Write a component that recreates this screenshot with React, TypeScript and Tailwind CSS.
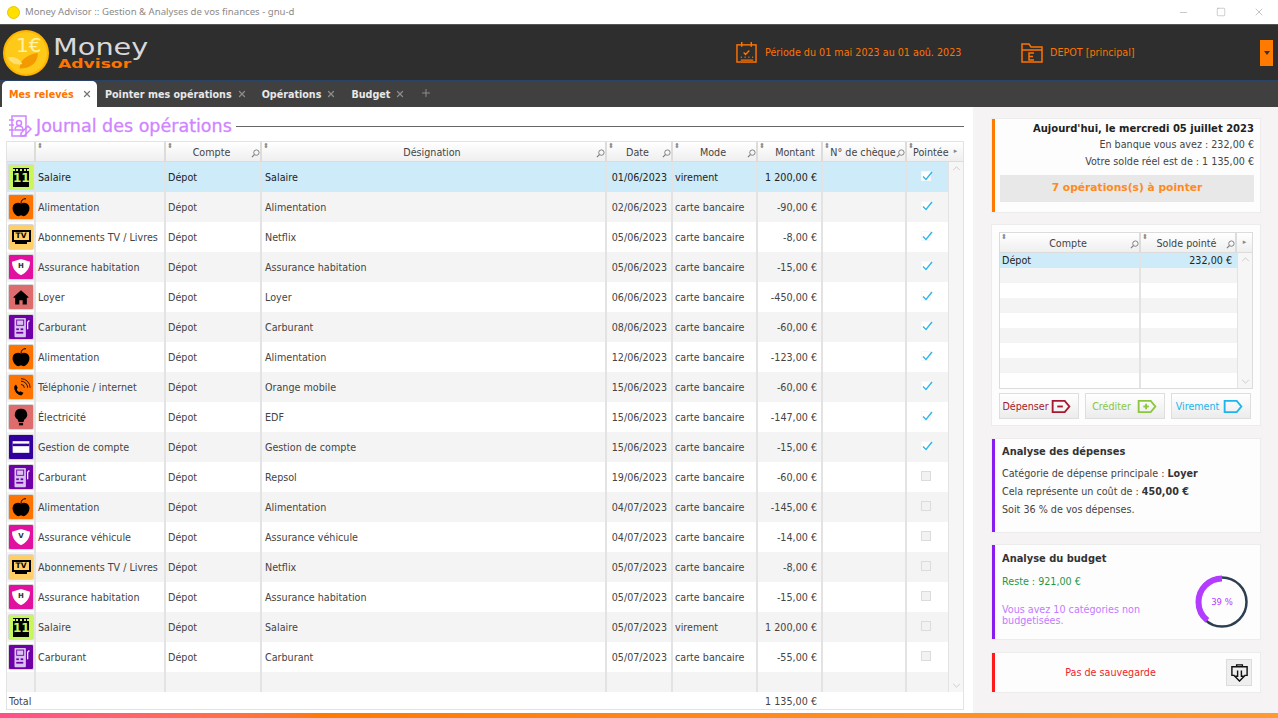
import { Minus, Plus, Square, X } from "lucide-react";

const FONT = "font-['DejaVu_Sans',sans-serif]";

type Kind = "salaire" | "alim" | "tv" | "assurH" | "assurV" | "loyer" | "carbu" | "tel" | "elec" | "compte";

const operations: [Kind, string, string, string, string, string, boolean][] = [
  ["salaire", "Salaire", "Salaire", "01/06/2023", "virement", "1 200,00 €", true],
  ["alim", "Alimentation", "Alimentation", "02/06/2023", "carte bancaire", "-90,00 €", true],
  ["tv", "Abonnements TV / Livres", "Netflix", "05/06/2023", "carte bancaire", "-8,00 €", true],
  ["assurH", "Assurance habitation", "Assurance habitation", "05/06/2023", "carte bancaire", "-15,00 €", true],
  ["loyer", "Loyer", "Loyer", "06/06/2023", "carte bancaire", "-450,00 €", true],
  ["carbu", "Carburant", "Carburant", "08/06/2023", "carte bancaire", "-60,00 €", true],
  ["alim", "Alimentation", "Alimentation", "12/06/2023", "carte bancaire", "-123,00 €", true],
  ["tel", "Téléphonie / internet", "Orange mobile", "15/06/2023", "carte bancaire", "-60,00 €", true],
  ["elec", "Électricité", "EDF", "15/06/2023", "carte bancaire", "-147,00 €", true],
  ["compte", "Gestion de compte", "Gestion de compte", "15/06/2023", "carte bancaire", "-15,00 €", true],
  ["carbu", "Carburant", "Repsol", "19/06/2023", "carte bancaire", "-60,00 €", false],
  ["alim", "Alimentation", "Alimentation", "04/07/2023", "carte bancaire", "-145,00 €", false],
  ["assurV", "Assurance véhicule", "Assurance véhicule", "04/07/2023", "carte bancaire", "-14,00 €", false],
  ["tv", "Abonnements TV / Livres", "Netflix", "05/07/2023", "carte bancaire", "-8,00 €", false],
  ["assurH", "Assurance habitation", "Assurance habitation", "05/07/2023", "carte bancaire", "-15,00 €", false],
  ["salaire", "Salaire", "Salaire", "05/07/2023", "virement", "1 200,00 €", false],
  ["carbu", "Carburant", "Carburant", "05/07/2023", "carte bancaire", "-55,00 €", false],
];

const iconBg: Record<Kind, string> = {
  salaire: "bg-[#c8f75c]",
  alim: "bg-[#ff7300]",
  tv: "bg-[#ffcf66]",
  assurH: "bg-[#e2109f]",
  assurV: "bg-[#e2109f]",
  loyer: "bg-[#de6c6c]",
  carbu: "bg-[#6f00a8]",
  tel: "bg-[#ff7300]",
  elec: "bg-[#de6c6c]",
  compte: "bg-[#32009c]",
};

function Glyph({ kind }: { kind: Kind }) {
  if (kind === "salaire")
    return (
      <div className="flex h-[19px] w-[16px] flex-col bg-black">
        <div className="mt-[1px] h-[2px] border-t-2 border-dotted border-[#c8f75c]" />
        <div className="flex-1 text-center text-[12px] leading-[15px] font-bold text-[#c8f75c]">11</div>
      </div>
    );
  if (kind === "tv")
    return (
      <div className="flex w-[20px] flex-col items-center">
        <div className="h-[12px] w-[19px] border-2 border-black text-center text-[7.5px] leading-[8px] font-bold text-black">TV</div>
        <div className="h-[2px] w-[12px] bg-black" />
      </div>
    );
  if (kind === "assurH" || kind === "assurV")
    return (
      <div className="relative h-[16px] w-[18px]">
        <svg viewBox="0 0 20 18" className="absolute inset-0">
          <path d="M0 3 10 0 20 3C20 10 16 15 10 18 4 15 0 10 0 3Z" fill="#fff" />
        </svg>
        <span className="absolute inset-x-0 top-[3px] text-center text-[7px] leading-[9px] font-bold text-[#333]">
          {kind === "assurH" ? "H" : "V"}
        </span>
      </div>
    );
  if (kind === "carbu")
    return (
      <svg viewBox="0 0 24 24" className="h-[21px] w-[21px]">
        <rect x="4" y="1" width="13" height="22" rx="1" fill="#d9c2ee" />
        <rect x="6" y="3" width="9" height="7" fill="#6f00a8" />
        <rect x="7" y="4" width="7" height="5" fill="#d9c2ee" />
        <rect x="6" y="13" width="3" height="2" fill="#6f00a8" />
        <rect x="11" y="13" width="3" height="2" fill="#6f00a8" />
        <rect x="6" y="17" width="8" height="2" fill="#6f00a8" />
        <path d="M19 14V6l2-2" stroke="#fff" strokeWidth="1.5" fill="none" />
      </svg>
    );
  const paths: Partial<Record<Kind, React.ReactNode>> = {
    alim: (
      <>
        <path d="M12 8c-3-2-9-1-10 4-1 6 4 11 7 11 1 0 2-1 3-1s2 1 3 1c3 0 8-5 7-11-1-5-7-6-10-4Z" fill="#000" />
        <path d="M12 8c0-4 2-6 6-6" stroke="#000" strokeWidth="1.2" fill="none" />
      </>
    ),
    loyer: <path d="M12 4 3 12v1h2v8h5v-5h4v5h5v-8h2v-1Z" fill="#000" />,
    tel: (
      <>
        <path d="M4 11c-1 6 4 11 9 11l2-3-4-2-1 1c-1 0-3-2-3-3l1-2-2-4Z" fill="#000" />
        <path d="M12 9a4 4 0 0 1 4 4M12 5a8 8 0 0 1 8 8M12 2a11 11 0 0 1 11 11" stroke="#000" strokeWidth="1" fill="none" />
      </>
    ),
    elec: (
      <>
        <path d="M12 2a7 7 0 0 0-4 13l1 3h6l1-3a7 7 0 0 0-4-13Z" fill="#000" />
        <rect x="9.5" y="19" width="5" height="3" fill="#000" />
      </>
    ),
    compte: (
      <>
        <rect x="2" y="5" width="20" height="14" fill="#fff" />
        <rect x="2" y="8" width="20" height="3" fill="#32009c" />
      </>
    ),
  };
  return (
    <svg viewBox="0 0 24 24" className="h-[20px] w-[20px]">
      {paths[kind]}
    </svg>
  );
}

function CatIcon({ kind }: { kind: Kind }) {
  return (
    <div className={`flex h-[26px] w-[26px] items-center justify-center overflow-hidden rounded-[2px] border border-[#d8d8d8] ${iconBg[kind]}`}>
      <Glyph kind={kind} />
    </div>
  );
}

function Loupe() {
  return (
    <svg viewBox="0 0 10 10" className="mb-[1px] h-[9px] w-[9px] shrink-0 text-[#777]">
      <circle cx="6" cy="4" r="3" stroke="currentColor" fill="none" />
      <path d="M3.8 6.2 1 9" stroke="currentColor" strokeWidth="1.2" />
    </svg>
  );
}

function HeadCell({ label, w, search = true, sort = true, className = "" }: { label?: string; w: string; search?: boolean; sort?: boolean; className?: string }) {
  return (
    <div className={`relative flex h-full shrink-0 items-end border-r-2 border-[#dcdcdc] pb-[2px] pl-[6px] ${w} ${className}`}>
      {sort && <span className="absolute top-0 left-[1px] text-[7px] leading-[9px] text-[#888]">⬍</span>}
      <span className="flex-1 text-center text-[9.6px] leading-[13px] whitespace-nowrap text-[#444]">{label}</span>
      {label && search && <Loupe />}
    </div>
  );
}

function Check({ on }: { on: boolean }) {
  return (
    <div className={`relative h-[10px] w-[10px] border ${on ? "border-[#f4f8fb] bg-white" : "border-[#dcdcdc] bg-[#f2f2f2]"}`}>
      {on && (
        <svg viewBox="0 0 12 12" className="absolute -top-[2px] -left-[1px] h-[12px] w-[12px]">
          <path d="M2 6.5 5 9.5 11 2" stroke="#33b5ea" strokeWidth="1.4" fill="none" />
        </svg>
      )}
    </div>
  );
}

function Row({ op, index }: { op: (typeof operations)[number]; index: number }) {
  const [kind, cat, des, date, mode, amount, on] = op;
  const bg = index === 0 ? "bg-[#cdebf8] text-[#222]" : index % 2 === 1 ? "bg-[#f4f4f4] text-[#444]" : "bg-white text-[#444]";
  const cell = "flex h-full shrink-0 items-center border-r-2 border-[#e3e3e3] px-[2px] pt-[2px] text-[9.6px] whitespace-nowrap";
  return (
    <div className={`flex h-[30px] ${bg}`}>
      <div className={`${cell} w-[29px] !px-0 !pt-0 !pl-[1px]`}>
        <CatIcon kind={kind} />
      </div>
      <div className={`${cell} w-[130px]`}>{cat}</div>
      <div className={`${cell} w-[96px]`}>Dépot</div>
      <div className={`${cell} w-[345px] !pl-[3px]`}>{des}</div>
      <div className={`${cell} w-[66px] justify-end !pr-[4px]`}>{date}</div>
      <div className={`${cell} w-[85px]`}>{mode}</div>
      <div className={`${cell} w-[65px] justify-end !pr-[4px]`}>{amount}</div>
      <div className={`${cell} w-[84px]`} />
      <div className="flex h-full w-[41px] shrink-0 items-center justify-center pr-[3px] pb-[2px]">
        <Check on={on} />
      </div>
    </div>
  );
}

function ScrollColumn() {
  return (
    <div className="flex h-full w-[15px] shrink-0 flex-col items-center justify-between border-l border-[#e3e3e3] bg-[#f6f6f6] py-[4px] text-[#c4c4c4]">
      <svg viewBox="0 0 10 6" className="h-[5px] w-[9px]"><path d="M1 5 5 1 9 5" stroke="currentColor" fill="none" /></svg>
      <svg viewBox="0 0 10 6" className="h-[5px] w-[9px]"><path d="M1 1 5 5 9 1" stroke="currentColor" fill="none" /></svg>
    </div>
  );
}

function Tab({ label, ml }: { label: string; ml: string }) {
  return (
    <div className={`flex items-center gap-[5px] text-[#e8e8e8] ${ml}`}>
      <span className="pt-[2px] text-[9.6px] font-bold whitespace-nowrap">{label}</span>
      <X size={10} strokeWidth={3} className="mb-[1px] text-[#8c8c8c]" />
    </div>
  );
}

function Card({ accent, className = "", children }: { accent: string; className?: string; children: React.ReactNode }) {
  return (
    <div className={`ml-[18px] flex w-[270px] border border-[#ececec] bg-[#fdfdfd] ${className}`}>
      <div className={`w-[3px] shrink-0 ${accent}`} />
      <div className="min-w-0 flex-1">{children}</div>
    </div>
  );
}

function ActionBtn({ label, color, sign }: { label: string; color: string; sign?: string }) {
  return (
    <div className="flex h-[26px] w-[80px] items-center border border-[#dedede] bg-gradient-to-b from-white to-[#ececec] pr-[7px] text-[9.6px]" style={{ color }}>
      <span className="flex-1 pt-[2px] text-center">{label}</span>
      <svg viewBox="0 0 20 14" className="h-[13px] w-[20px]" fill="none" stroke={color} strokeWidth="2">
        <path d="M1 1H14L19 7 14 13H1Z" />
        {sign && <path d="M6 7H12" />}
        {sign === "+" && <path d="M9 4V10" />}
      </svg>
    </div>
  );
}

export default function App() {
  return (
    <div className={`flex h-[718px] w-[1278px] flex-col overflow-hidden bg-white ${FONT}`}>
      {/* barre de titre */}
      <div className="flex h-[25px] shrink-0 items-center border-b border-[#555] bg-white pl-[7px]">
        <div className="h-[13px] w-[13px] rounded-full border border-[#e8c800] bg-[#ffe000]" />
        <span className="ml-[5px] font-['Noto_Sans',sans-serif] text-[9.6px] text-[#8a8a8a]">
          Money Advisor :: Gestion &amp; Analyses de vos finances - gnu-d
        </span>
        <div className="ml-auto flex items-center gap-[27px] pr-[13px] text-[#8a8a8a]">
          <Minus size={11} strokeWidth={1} />
          <Square size={10} strokeWidth={1} />
          <X size={12} strokeWidth={1} />
        </div>
      </div>

      {/* en-tête */}
      <div className="flex h-[56px] shrink-0 items-center border-b border-[#2a4468] bg-[#2e2e2e]">
        <div className="relative ml-[3px] h-[46px] w-[46px] shrink-0 overflow-hidden rounded-full border-2 border-[#ffb400] bg-[#ffc91a]">
          <span className="absolute top-[2px] left-[11px] text-[20px] leading-[22px] text-[#fff2a8]">1€</span>
          <svg viewBox="0 0 46 46" className="absolute inset-0">
            <path d="M16 40C16 30 26 24 36 23 36 33 29 40 16 40Z" fill="#f29a00" />
            <path d="M3 28C9 26 16 29 19 35 12 37 6 34 3 28Z" fill="#ffdf70" />
          </svg>
        </div>
        <div className="mt-[1px] ml-[4px] flex w-[100px] flex-col">
          <span className="origin-left scale-x-[1.25] text-[23px] leading-[20px] text-[#d9d9d9]">Money</span>
          <span className="origin-left translate-x-[5px] scale-x-[1.32] text-[13px] leading-[13px] font-bold text-[#ff7300]">Advisor</span>
        </div>
        <svg viewBox="0 0 22 22" className="ml-[583px] h-[21px] w-[21px]" fill="none" stroke="#ff7300" strokeWidth="1.5">
          <rect x="1" y="3" width="20" height="18" />
          <path d="M6 0v5M16 0v5M5 16h1M9 16h1M13 16h1M17 16h1M5 19h13M8 11l2 2 4-4" />
        </svg>
        <span className="ml-[8px] w-[194px] pt-[1px] text-[9.6px] whitespace-nowrap text-[#ff7300]">Période du 01 mai 2023 au 01 aoû. 2023</span>
        <svg viewBox="0 0 22 22" className="ml-[62px] h-[22px] w-[22px]" fill="none" stroke="#ff7300" strokeWidth="1.5">
          <path d="M1 20V2h7l2 3h11v15Z" />
          <path d="M1 8h20" />
          <path d="M13 11H8v7h5M8 14.5h4" />
        </svg>
        <span className="ml-[7px] pt-[1px] text-[9.6px] whitespace-nowrap text-[#ff7300]">DEPOT [principal]</span>
        <div className="mr-[5px] ml-auto flex h-[26px] w-[13px] items-center justify-center bg-[#ff7a00]">
          <div className="h-0 w-0 border-x-[3px] border-t-[4px] border-x-transparent border-t-[#333]" />
        </div>
      </div>

      {/* onglets */}
      <div className="flex h-[26px] shrink-0 items-stretch bg-[#404040] pl-[2px]">
        <div className="flex w-[95px] items-center justify-between rounded-t-[5px] bg-white pr-[5px] pl-[7px] text-[#ff7300]">
          <span className="pt-[2px] text-[9.6px] font-bold whitespace-nowrap">Mes relevés</span>
          <X size={10} strokeWidth={3} className="text-[#777]" />
        </div>
        <Tab label="Pointer mes opérations" ml="ml-[8px]" />
        <Tab label="Opérations" ml="ml-[15px]" />
        <Tab label="Budget" ml="ml-[15px]" />
        <div className="flex items-center pl-[15px]">
          <Plus size={12} className="mb-[3px] text-[#8c8c8c]" />
        </div>
      </div>

      {/* contenu */}
      <div className="flex min-h-0 flex-1">
        <div className="flex w-[973px] shrink-0 flex-col pr-[9px] pl-[6px]">
          <div className="flex h-[34px] shrink-0 items-center pt-[4px]">
            <svg viewBox="0 0 24 24" className="ml-[2px] h-[24px] w-[24px]" fill="none" stroke="#cf85ff" strokeWidth="1.5">
              <path d="M4 2h14v20H4ZM1 6h5M1 11h5M1 16h5" />
              <circle cx="11" cy="9" r="2.5" />
              <path d="M7 16c0-3 2-4 4-4s4 1 4 4ZM23 15l-7 7h-3v-3l7-7Z" />
            </svg>
            <span className="ml-[4px] text-[17.5px] whitespace-nowrap text-[#cf85ff] [-webkit-text-stroke:0.3px_#cf85ff]">Journal des opérations</span>
            <div className="ml-[4px] h-[1px] flex-1 bg-[#666]" />
          </div>
          <div className="flex h-[569px] flex-col border border-[#e3e3e3]">
            <div className="flex h-[20px] shrink-0 border-b border-[#dcdcdc] bg-gradient-to-b from-white to-[#efefef]">
              <HeadCell w="w-[29px]" sort={false} />
              <HeadCell w="w-[130px]" />
              <HeadCell w="w-[96px]" label="Compte" />
              <HeadCell w="w-[345px]" label="Désignation" />
              <HeadCell w="w-[66px]" label="Date" />
              <HeadCell w="w-[85px]" label="Mode" />
              <HeadCell w="w-[65px]" label="Montant" search={false} className="!pr-[3px] !pl-[14px]" />
              <HeadCell w="w-[84px]" label="N° de chèque" className="!pr-[0px] !pl-[7px]" />
              <HeadCell w="w-[41px]" label="Pointée" search={false} className="!border-r-0 !pl-[6px]" />
              <div className="flex w-[15px] items-center justify-center text-[7px] text-[#888]">▸</div>
            </div>
            <div className="flex min-h-0 flex-1">
              <div className="min-w-0 flex-1">
                {operations.map((op, i) => (
                  <Row key={i} op={op} index={i} />
                ))}
                <div className="flex h-[20px] bg-[#f4f4f4]">
                  <div className="w-[29px] border-r-2 border-[#e3e3e3]" />
                  <div className="w-[130px] border-r-2 border-[#e3e3e3]" />
                  <div className="w-[96px] border-r-2 border-[#e3e3e3]" />
                  <div className="w-[345px] border-r-2 border-[#e3e3e3]" />
                  <div className="w-[66px] border-r-2 border-[#e3e3e3]" />
                  <div className="w-[85px] border-r-2 border-[#e3e3e3]" />
                  <div className="w-[65px] border-r-2 border-[#e3e3e3]" />
                  <div className="w-[84px] border-r-2 border-[#e3e3e3]" />
                </div>
              </div>
              <ScrollColumn />
            </div>
            <div className="flex h-[17px] shrink-0 items-center pt-[4px] text-[9.6px] text-[#444]">
              <span className="w-[701px] pl-[2px]">Total</span>
              <span className="w-[109px] text-right">1 135,00 €</span>
            </div>
          </div>
        </div>

        {/* colonne droite */}
        <div className="flex flex-1 flex-col bg-[#f6f3f4] pt-[11px] text-[9.6px]">
          <Card accent="bg-[#ff7a00]" className="h-[95px]">
            <div className="flex flex-col items-end pt-[2px] pr-[6px] pl-[5px] text-[#444]">
              <span className="text-[10px] leading-[15px] font-bold text-[#222]">Aujourd'hui, le mercredi 05 juillet 2023</span>
              <span className="mt-[1px] leading-[16px]">En banque vous avez : 232,00 €</span>
              <span className="leading-[17px]">Votre solde réel est de : 1 135,00 €</span>
              <div className="mt-[5px] flex h-[27px] w-[254px] items-center justify-center bg-[#e8e8e8] text-[10.7px] font-bold text-[#ff8a1e]">
                7 opérations(s) à pointer
              </div>
            </div>
          </Card>

          <div className="mt-[11px]">
            <div className="ml-[18px] h-[202px] w-[270px] border border-[#ececec] bg-[#fdfdfd] pt-[7px] pl-[7px]">
              <div className="flex h-[157px] w-[254px] flex-col border border-[#dcdcdc] bg-white">
                <div className="flex h-[20px] shrink-0 border-b border-[#dcdcdc] bg-gradient-to-b from-white to-[#efefef]">
                  <HeadCell w="w-[141px]" label="Compte" />
                  <HeadCell w="w-[96px]" label="Solde pointé" />
                  <div className="flex flex-1 items-center justify-center text-[7px] text-[#888]">▸</div>
                </div>
                <div className="flex min-h-0 flex-1">
                  <div className="relative min-w-0 flex-1">
                    {Array.from({ length: 9 }).map((_, i) => (
                      <div key={i} className={`flex h-[15px] ${i === 0 ? "bg-[#cdebf8] text-[#222]" : i % 2 === 1 ? "bg-[#f4f4f4]" : "bg-white"}`}>
                        <div className="w-[141px] border-r-2 border-[#e3e3e3] pl-[2px] leading-[15px]">{i === 0 && "Dépot"}</div>
                        <div className="flex-1 pr-[5px] text-right leading-[15px]">{i === 0 && "232,00 €"}</div>
                      </div>
                    ))}
                  </div>
                  <ScrollColumn />
                </div>
              </div>
              <div className="mt-[4px] flex gap-[6px]">
                <ActionBtn label="Dépenser" color="#a5182f" sign="-" />
                <ActionBtn label="Créditer" color="#8cc63f" sign="+" />
                <ActionBtn label="Virement" color="#1fb4ea" />
              </div>
            </div>
          </div>

          <Card accent="bg-[#8a1cf0]" className="mt-[12px] h-[95px]">
            <div className="pt-[5px] pl-[7px] text-[#444]">
              <div className="text-[9.9px] leading-[16px] font-bold text-[#333]">Analyse des dépenses</div>
              <div className="mt-[5px] leading-[18px]">Catégorie de dépense principale : <b className="text-[#333]">Loyer</b></div>
              <div className="leading-[18px]">Cela représente un coût de : <b className="text-[#333]">450,00 €</b></div>
              <div className="leading-[18px]">Soit 36 % de vos dépenses.</div>
            </div>
          </Card>

          <Card accent="bg-[#8a1cf0]" className="mt-[11px] h-[96px]">
            <div className="flex h-full pt-[6px] pl-[7px]">
              <div className="flex-1">
                <div className="text-[9.9px] leading-[16px] font-bold text-[#333]">Analyse du budget</div>
                <div className="mt-[7px] leading-[16px] text-[#1c9a4a]">Reste : 921,00 €</div>
                <div className="mt-[14px] w-[160px] leading-[11px] text-[#c27bff]">Vous avez 10 catégories non budgetisées.</div>
              </div>
              <div className="relative mt-[24px] mr-[11px] h-[54px] w-[54px]">
                <svg viewBox="0 0 54 54" className="absolute inset-0">
                  <circle cx="27" cy="27" r="24.5" fill="none" stroke="#2c3e50" strokeWidth="2.5" />
                  <circle cx="27" cy="27" r="23.5" fill="none" stroke="#b23cff" strokeWidth="6" strokeDasharray="57.6 147.7" transform="translate(54 0) scale(-1 1) rotate(-90 27 27)" />
                </svg>
                <span className="absolute inset-0 flex items-center justify-center text-[8.5px] text-[#b23cff]">39 %</span>
              </div>
            </div>
          </Card>

          <Card accent="bg-[#ff1a1a]" className="mt-[12px] h-[41px]">
            <div className="flex h-full items-center">
              <span className="flex-1 pt-[2px] text-center text-[#f0242c]">Pas de sauvegarde</span>
              <div className="mr-[8px] flex h-[27px] w-[26px] items-center justify-center border border-[#dcdcdc] bg-[#efefef]">
                <svg viewBox="0 0 20 20" className="h-[19px] w-[19px]" fill="none" stroke="#111" strokeWidth="1.5">
                  <path d="M5 13H2V4h16v9h-3M7 2h6v2H7ZM8 8v6H5l5 5 5-5h-3V8" />
                </svg>
              </div>
            </div>
          </Card>
        </div>
      </div>

      <div className="h-[5px] shrink-0 bg-gradient-to-r from-[#ff4f8a] via-[#ff7a00] via-25% to-[#ff9a30]" />
    </div>
  );
}
